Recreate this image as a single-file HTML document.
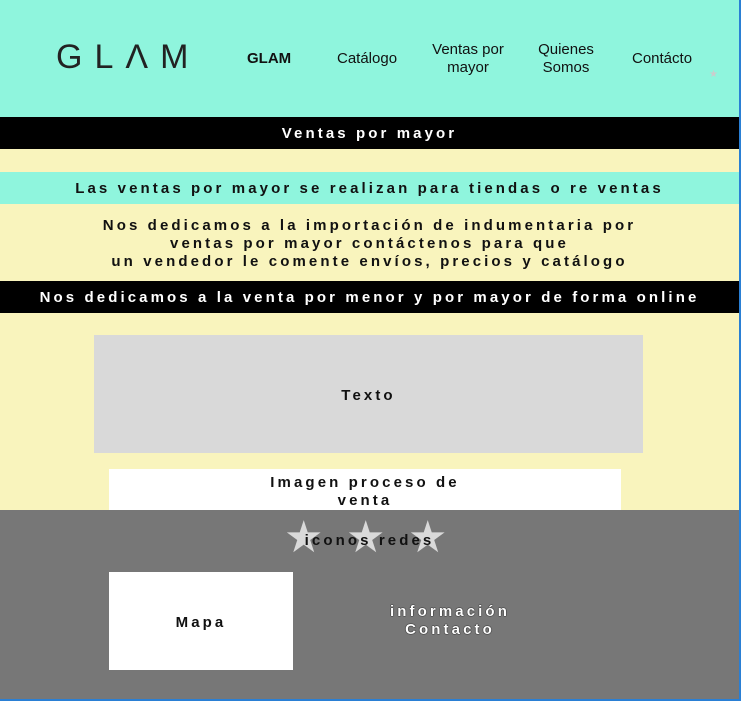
<!DOCTYPE html>
<html><head><meta charset="utf-8"><style>
*{margin:0;padding:0;box-sizing:border-box}
body{width:741px;height:701px;position:relative;overflow:hidden;background:#fff;font-family:"Liberation Sans",sans-serif}
.a{position:absolute}
.t{font-weight:bold;font-size:15px;letter-spacing:3.1px;text-align:center;position:absolute;left:0;width:739px}
.nav{position:absolute;font-size:15px;color:#111;text-align:center;line-height:18px}
.s{position:absolute;top:516px;font-size:44px;color:#d9d9d9;line-height:44px}
</style></head><body>
<div class="a" style="left:0;top:0;width:739px;height:117px;background:#8ff5dd"></div>
<div class="a" style="left:56px;top:38px;font-size:34px;letter-spacing:12px;color:#222">GL&Lambda;M</div>
<div class="nav" style="left:247px;top:50px;font-weight:bold">GLAM</div>
<div class="nav" style="left:337px;top:50px">Catálogo</div>
<div class="nav" style="left:424px;top:41px;width:88px">Ventas por<br>mayor</div>
<div class="nav" style="left:526px;top:41px;width:80px">Quienes<br>Somos</div>
<div class="nav" style="left:632px;top:50px">Contácto</div>
<div class="a" style="left:709px;top:69px;color:#ccc;font-size:10px">★</div>
<div class="a" style="left:0;top:117px;width:739px;height:32px;background:#000"></div>
<div class="t" style="top:125px;color:#fff">Ventas por mayor</div>
<div class="a" style="left:0;top:149px;width:739px;height:23px;background:#f9f4bd"></div>
<div class="a" style="left:0;top:172px;width:739px;height:32px;background:#8ff5dd"></div>
<div class="t" style="top:180px;color:#111">Las ventas por mayor se realizan para tiendas o re ventas</div>
<div class="a" style="left:0;top:204px;width:739px;height:77px;background:#f9f4bd"></div>
<div class="t" style="top:217px;color:#111;line-height:18px">Nos dedicamos a la importación de indumentaria por<br>ventas por mayor contáctenos para que<br>un vendedor le comente envíos, precios y catálogo</div>
<div class="a" style="left:0;top:281px;width:739px;height:32px;background:#000"></div>
<div class="t" style="top:289px;color:#fff">Nos dedicamos a la venta por menor y por mayor de forma online</div>
<div class="a" style="left:0;top:313px;width:739px;height:197px;background:#f9f4bd"></div>
<div class="a" style="left:94px;top:335px;width:549px;height:118px;background:#d9d9d9"></div>
<div class="t" style="top:387px;color:#111;left:94px;width:549px">Texto</div>
<div class="a" style="left:109px;top:469px;width:512px;height:41px;background:#fff"></div>
<div class="t" style="top:474px;left:220px;width:290px;color:#111;line-height:18px">Imagen proceso de<br>venta</div>
<div class="a" style="left:0;top:510px;width:739px;height:189px;background:#777"></div>
<div class="s" style="left:284px">★</div>
<div class="s" style="left:346px">★</div>
<div class="s" style="left:408px">★</div>
<div class="t" style="top:532px;color:#111">iconos redes</div>
<div class="a" style="left:109px;top:572px;width:184px;height:98px;background:#fff"></div>
<div class="t" style="top:614px;left:109px;width:184px;color:#111">Mapa</div>
<div class="t" style="top:603px;left:300px;width:300px;color:#fff;line-height:18px;text-shadow:0 0 1px #000,0 0 1px #000">información<br>Contacto</div>
<div class="a" style="left:739px;top:0;width:2px;height:701px;background:#2a7fd4"></div>
<div class="a" style="left:0;top:699px;width:741px;height:2px;background:#2a7fd4"></div>
</body></html>
